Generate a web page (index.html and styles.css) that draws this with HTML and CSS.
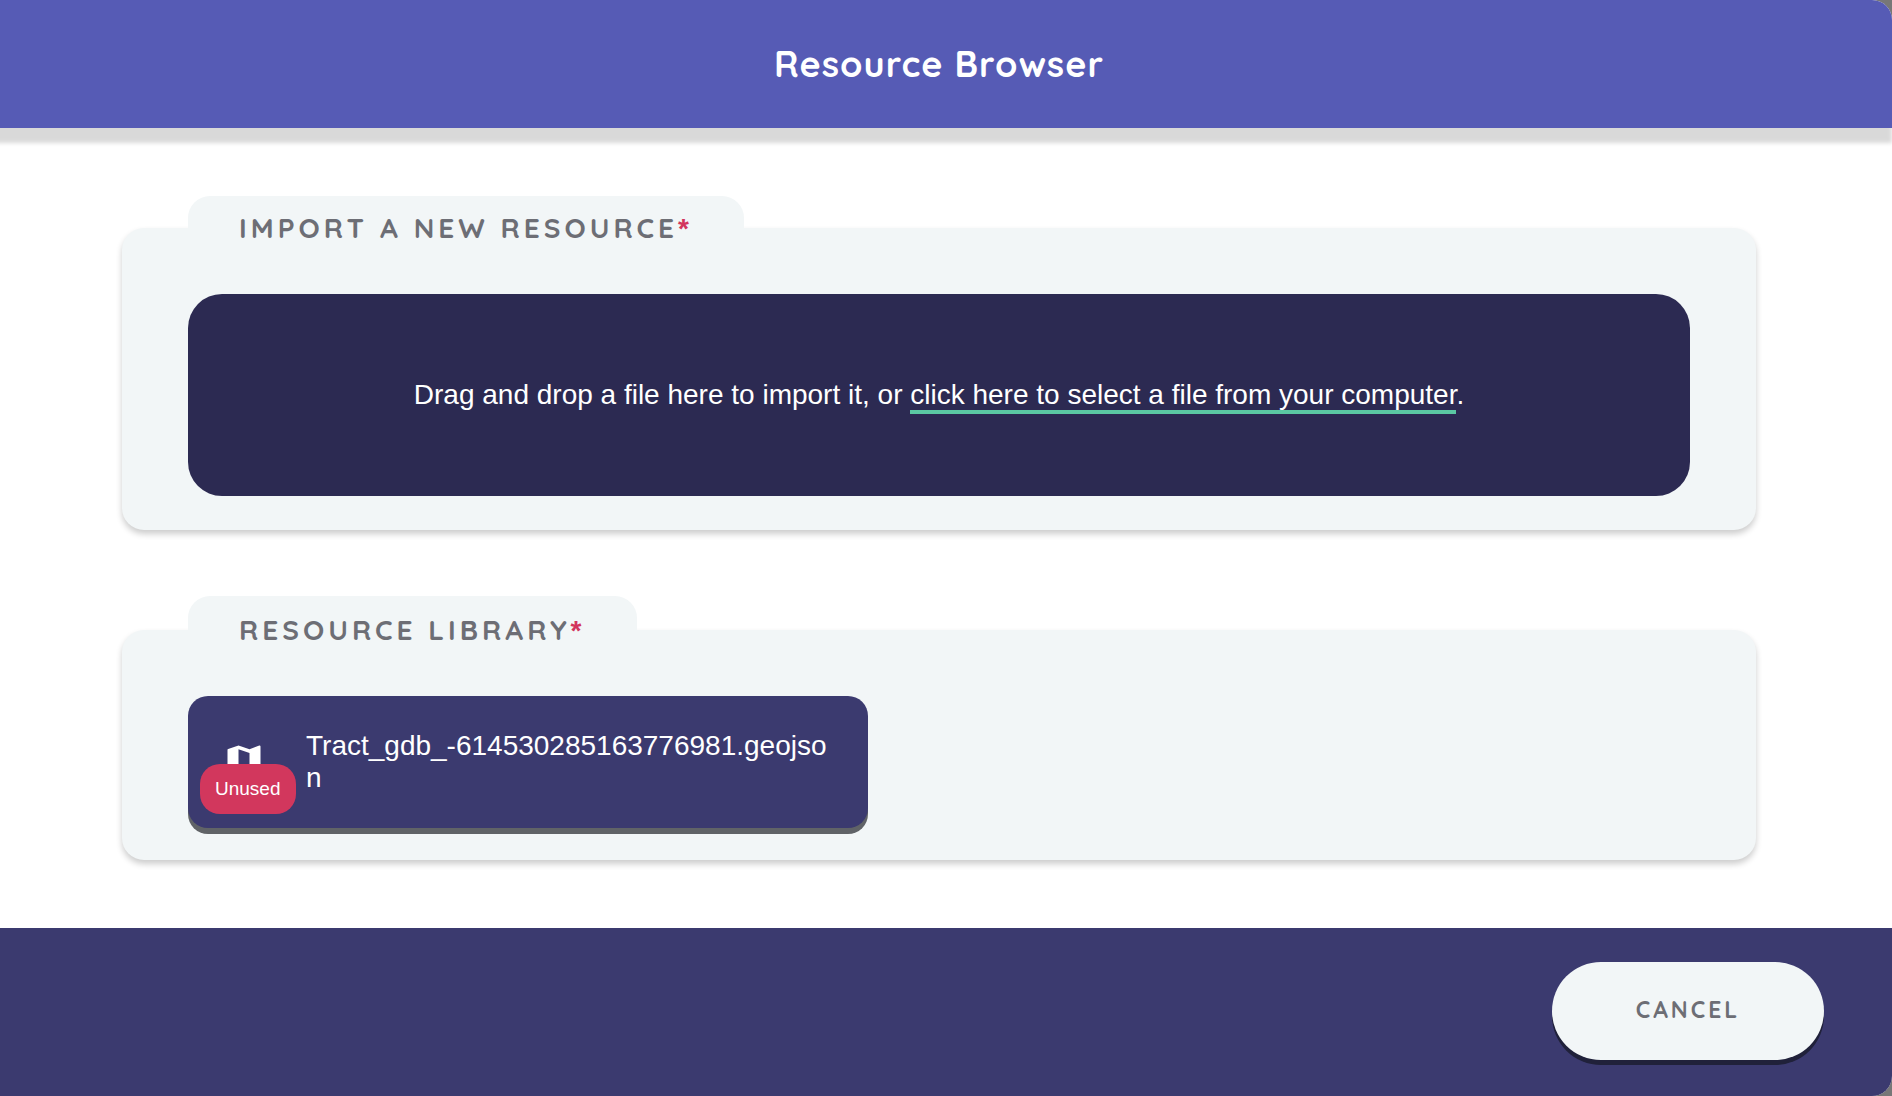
FILE: index.html
```html
<!DOCTYPE html>
<html lang="en">
<head>
<meta charset="utf-8">
<title>Resource Browser</title>
<link rel="stylesheet" href="styles.css">
</head>
<body>
<main class="modal">
  <header class="modal-header"><h1>Resource Browser</h1></header>
  <div class="modal-body">
    <section class="panel">
      <h2 class="panel-title">Import a new resource<span class="required">*</span></h2>
      <div class="dropzone">
        <p>Drag and drop a file here to import it, or <a class="file-link" href="#">click here to select a file from your computer</a>.</p>
      </div>
    </section>
    <section class="panel panel-library">
      <h2 class="panel-title">Resource library<span class="required">*</span></h2>
      <div class="library">
        <button class="resource" type="button">
          <svg class="resource-icon" viewBox="0 0 24 24" aria-hidden="true"><path fill="currentColor" d="M15,19L9,16.89V5L15,7.11M20.5,3C20.44,3 20.39,3 20.34,3L15,5.1L9,3L3.36,4.9C3.15,4.97 3,5.15 3,5.38V20.5A0.5,0.5 0 0,0 3.5,21C3.55,21 3.61,21 3.66,20.97L9,18.9L15,21L20.64,19.1C20.85,19 21,18.85 21,18.62V3.5A0.5,0.5 0 0,0 20.5,3Z"/></svg>
          <span class="resource-name">Tract_gdb_-614530285163776981.geojson</span>
          <span class="badge">Unused</span>
        </button>
      </div>
    </section>
  </div>
  <footer class="modal-footer"><button class="cancel" type="button">Cancel</button></footer>
</main>
</body>
</html>
```
FILE: styles.css
```css
* { box-sizing: border-box; }

body {
  margin: 0;
  overflow-x: hidden;
  background: #777;
  font-family: "Liberation Sans", Arial, sans-serif;
  font-size: 28px;
  line-height: 32px;
}

h1, h2, p { margin: 0; }

.modal {
  display: flex;
  flex-direction: column;
  min-height: 100vh;
  margin-left: -20px;
  border-radius: 20px;
  overflow: hidden;
  background: #fff;
}

.modal-header {
  padding: 40px 34px 40px 40px;
  background: #565bb5;
  color: #fff;
  text-align: center;
  box-shadow: 0 15px 4px rgba(0, 0, 0, 0.15);
}

.modal-header h1 {
  font: 700 36px/48px Quicksand, Lato, sans-serif;
  letter-spacing: 1px;
}

.modal-body {
  display: flex;
  flex: 1;
  flex-direction: column;
  gap: 100px;
  padding: 100px 136px 68px 142px;
}

.panel {
  padding: 0 66px 34px;
  border-radius: 22px;
  background: #f2f6f7;
  box-shadow: 0 4px 6px rgba(0, 0, 0, 0.2);
}

.panel-title {
  width: fit-content;
  margin: -32px 0 34px;
  padding: 16px 51px;
  border-radius: 22px 22px 0 0;
  background: #f2f6f7;
  color: #6d6e75;
  font: 700 28px/32px Quicksand, Lato, sans-serif;
  letter-spacing: 4px;
  text-transform: uppercase;
}

.panel-library { padding-bottom: 32px; }

.panel-library .panel-title {
  margin: -34px 0 32px;
  padding: 18px 51px 16px;
}

.required {
  color: #d2355c;
  font-family: "Liberation Sans", Arial, sans-serif;
  line-height: 1;
}

.dropzone {
  padding: 85px 34px;
  border-radius: 34px;
  background: #2c2a52;
  color: #fff;
  text-align: center;
}

.file-link {
  border-bottom: 4px solid #5bc8a3;
  color: inherit;
  text-decoration: none;
}

.library {
  display: grid;
  grid-template-columns: repeat(auto-fill, minmax(min(100%, 680px), 680px));
  gap: 34px;
  padding-top: 2px;
}

.resource {
  position: relative;
  display: flex;
  align-items: center;
  gap: 40px;
  min-height: 132px;
  padding: 33px 34px;
  border: 0;
  border-radius: 20px;
  background: #3b3a6f;
  box-shadow: 0 6px 0 #606367;
  color: #fff;
  font: inherit;
  text-align: left;
}

.resource-icon {
  flex: none;
  width: 44px;
  height: 44px;
}

.resource-name {
  flex: 1;
  min-width: 0;
  overflow-wrap: anywhere;
}

.badge {
  position: absolute;
  bottom: 14px;
  left: 12px;
  padding: 13px 15px;
  border-radius: 20px;
  background: #d2375d;
  font-size: 19px;
  line-height: 24px;
}

.modal-footer {
  display: flex;
  justify-content: flex-end;
  padding: 34px 68px 36px;
  background: #3b3a6f;
}

.cancel {
  min-width: 272px;
  height: 98px;
  padding-bottom: 4px;
  border: 0;
  border-radius: 49px;
  background: #f2f6f7;
  box-shadow: 0 5px 0 #20213a;
  color: #6d6e75;
  font: 700 23px/32px Quicksand, Lato, sans-serif;
  letter-spacing: 3px;
  text-transform: uppercase;
}
```
